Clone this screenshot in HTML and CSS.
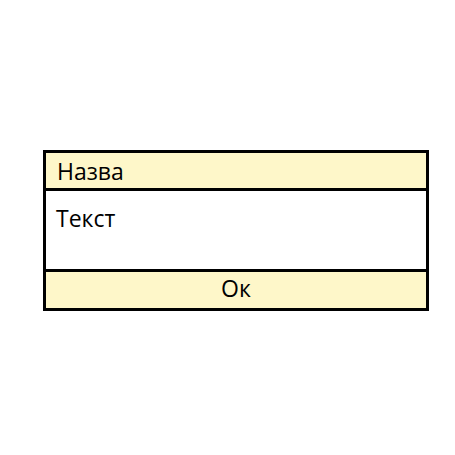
FILE: index.html
```html
<!DOCTYPE html>
<html lang="uk">
<head>
<meta charset="utf-8">
<title>Назва</title>
<link rel="stylesheet" href="styles.css">
</head>
<body>
<section class="dialog" role="dialog" aria-labelledby="dialog-title">
  <h1 class="dialog-title" id="dialog-title">Назва</h1>
  <p class="dialog-text">Текст</p>
  <button class="dialog-button" type="button">Ок</button>
</section>
</body>
</html>
```
FILE: styles.css
```css
* {
  box-sizing: border-box;
}

body {
  margin: 0;
  padding: 150px 26px 0 43px;
  background: #fff;
  color: #000;
  font: 23px/32px "Open Sans", "Noto Sans", sans-serif;
}

.dialog {
  display: flex;
  flex-direction: column;
  border: 3px solid #000;
}

.dialog-title {
  margin: 0;
  padding: 2px 11px 1px;
  background: #fef7c9;
  font: inherit;
}

.dialog-text {
  margin: 0;
  min-height: 84px;
  padding: 11px 10px;
  border-top: 3px solid #000;
  border-bottom: 3px solid #000;
}

.dialog-button {
  padding: 0 0 4px;
  border: 0;
  background: #fef7c9;
  color: inherit;
  font: inherit;
  cursor: pointer;
}
```
